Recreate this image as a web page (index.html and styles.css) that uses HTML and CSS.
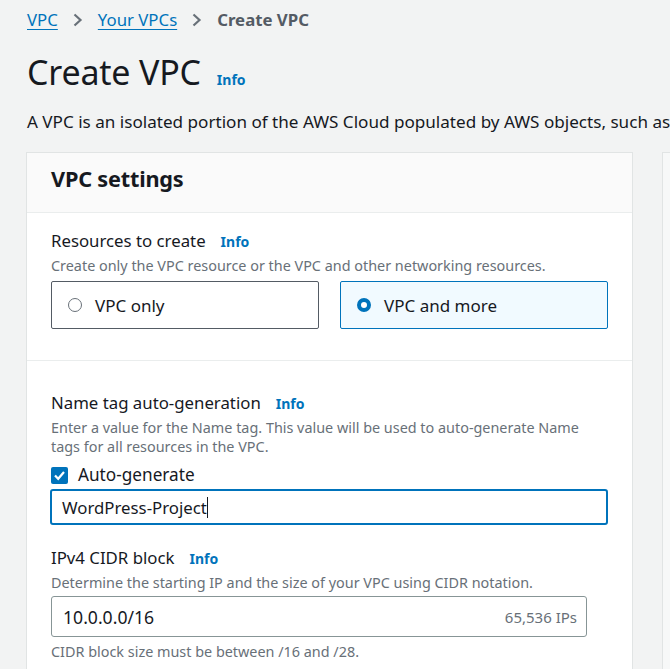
FILE: index.html
```html
<!DOCTYPE html>
<html>
<head>
<meta charset="utf-8">
<link rel="stylesheet" href="styles.css">
</head>
<body>
<div class="page">
  <nav class="crumbs">
    <a class="crumb-link">VPC</a>
    <svg class="chev" width="10" height="14" viewBox="0 0 10 14"><path d="M1.5 1.5 L7.5 7 L1.5 12.5" fill="none" stroke="#687078" stroke-width="2.2"/></svg>
    <a class="crumb-link">Your VPCs</a>
    <svg class="chev" width="10" height="14" viewBox="0 0 10 14"><path d="M1.5 1.5 L7.5 7 L1.5 12.5" fill="none" stroke="#687078" stroke-width="2.2"/></svg>
    <span class="crumb-current">Create VPC</span>
  </nav>
  <div class="title-row">
    <h1 class="title">Create VPC</h1>
    <span class="info">Info</span>
  </div>
  <p class="lead">A VPC is an isolated portion of the AWS Cloud populated by AWS objects, such as</p>
  <div class="columns">
    <section class="card">
      <header class="card-head">VPC settings</header>
      <div class="card-section">
        <div class="label-row"><span class="label">Resources to create</span><span class="info">Info</span></div>
        <div class="desc">Create only the VPC resource or the VPC and other networking resources.</div>
        <div class="tiles">
          <div class="tile">
            <span class="radio"></span><span class="tile-text">VPC only</span>
          </div>
          <div class="tile tile-on">
            <span class="radio radio-on"></span><span class="tile-text">VPC and more</span>
          </div>
        </div>
      </div>
      <div class="card-section sec2">
        <div class="label-row"><span class="label">Name tag auto-generation</span><span class="info">Info</span></div>
        <div class="desc">Enter a value for the Name tag. This value will be used to auto-generate Name tags for all resources in the VPC.</div>
        <div class="check-row">
          <span class="checkbox"><svg width="17" height="17" viewBox="0 0 17 17"><path d="M4 8.5 L7.2 11.8 L13 5" fill="none" stroke="#fff" stroke-width="2.2"/></svg></span>
          <span class="check-text">Auto-generate</span>
        </div>
        <div class="input input-focus"><span>WordPress-Project</span><span class="caret"></span></div>
        <div class="field">
          <div class="label-row"><span class="label">IPv4 CIDR block</span><span class="info">Info</span></div>
          <div class="desc">Determine the starting IP and the size of your VPC using CIDR notation.</div>
          <div class="input input-cidr"><span>10.0.0.0/16</span><span class="suffix">65,536 IPs</span></div>
          <div class="desc hint">CIDR block size must be between /16 and /28.</div>
        </div>
      </div>
    </section>
    <aside class="card side"></aside>
  </div>
</div>
</body>
</html>
```

FILE: styles.css
```css
* { box-sizing: border-box; }
html, body { margin: 0; padding: 0; }
body {
  background: #f2f3f3;
  font-family: "Noto Sans", "Open Sans", sans-serif;
  color: #16191f;
  overflow: hidden;
  width: 670px;
  height: 669px;
}
.page {
  padding: 7px 0 0 27px;
  width: 900px;
}
.crumbs {
  display: flex;
  align-items: center;
  gap: 15px;
  font-size: 16.8px;
  line-height: 26px;
}
.crumb-link {
  color: #0073bb;
  text-decoration: underline;
  text-underline-offset: 3px;
}
.crumb-current {
  color: #545b64;
  font-weight: 700;
}
.chev { display: block; }
.title-row {
  display: flex;
  align-items: baseline;
  gap: 16px;
  margin-top: 17px;
}
.title {
  margin: 0;
  font-size: 34px;
  font-weight: 400;
  line-height: 44px;
  letter-spacing: -0.2px;
}
.info {
  color: #0073bb;
  font-weight: 700;
  font-size: 14px;
}
.lead {
  margin: 17px 0 0;
  font-size: 17.1px;
  line-height: 22px;
  white-space: nowrap;
}
.columns {
  display: flex;
  gap: 29px;
  margin-top: 19px;
  margin-left: -1px;
}
.card {
  width: 607px;
  background: #fff;
  border: 1px solid #e1e4e4;
  border-bottom: none;
  height: 520px;
  flex: none;
}
.side { width: 300px; background: #f7f8f8; }
.card-head {
  font-weight: 700;
  font-size: 21.7px;
  letter-spacing: -0.2px;
  line-height: 28px;
  padding: 12px 24px 19px;
  border-bottom: 1px solid #eaeded;
  background: #fafafa;
}
.card-section {
  padding: 17px 24px 31px;
  border-bottom: 1px solid #eaeded;
}
.sec2 { border-bottom: none; padding-top: 31px; }
.label-row {
  display: flex;
  align-items: baseline;
  gap: 15px;
}
.label {
  font-size: 16.8px;
  line-height: 22px;
}
.desc {
  font-size: 14.4px;
  line-height: 19px;
  color: #687078;
  margin-top: 4px;
  padding-right: 20px;
}
.tiles {
  display: flex;
  gap: 21px;
  margin-top: 6px;
}
.tile {
  width: 269px;
  height: 48px;
  border: 1px solid #545b64;
  border-radius: 2px;
  display: flex;
  align-items: center;
  padding-left: 16px;
  gap: 13px;
}
.tile-on {
  background: #f1faff;
  border-color: #0073bb;
}
.tile-text { font-size: 17px; }
.radio {
  width: 14px;
  height: 14px;
  border-radius: 50%;
  border: 1.5px solid #687078;
  flex: none;
}
.radio-on {
  border: 4.5px solid #0073bb;
  background: #fff;
}
.check-row {
  display: flex;
  align-items: center;
  gap: 10px;
  margin-top: 9px;
}
.checkbox {
  width: 17px;
  height: 17px;
  background: #0073bb;
  border-radius: 2px;
  display: block;
}
.checkbox svg { display: block; }
.check-text { font-size: 17.2px; line-height: 20px; }
.input {
  display: flex;
  align-items: center;
  font-size: 16.8px;
  border-radius: 3px;
}
.input-focus {
  margin-top: 4px;
  margin-left: -1px;
  width: 558px;
  height: 36px;
  border: 2px solid #0073bb;
  padding-left: 10px;
}
.caret {
  display: inline-block;
  width: 1px;
  height: 21px;
  background: #16191f;
}
.field { margin-top: 22px; }
.input-cidr {
  margin-top: 4px;
  width: 536px;
  height: 41px;
  border: 1px solid #879596;
  padding: 0 9px 0 11px;
  justify-content: space-between;
  font-size: 17.6px;
}
.suffix {
  font-size: 15px;
  color: #687078;
}
.hint { margin-top: 5px; }
```
